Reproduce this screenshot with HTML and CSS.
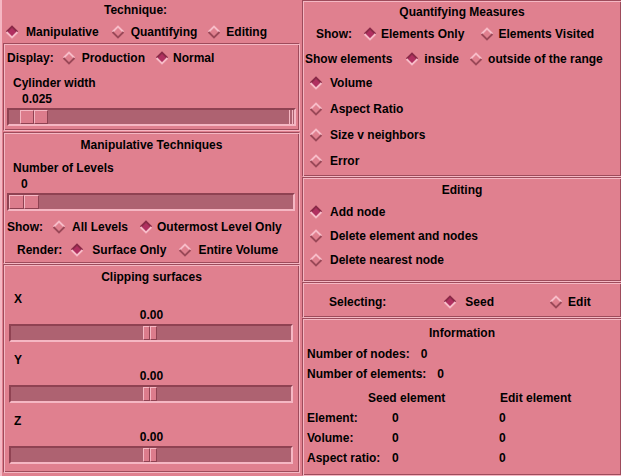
FILE: index.html
```html
<!DOCTYPE html>
<html>
<head>
<meta charset="utf-8">
<link rel="stylesheet" href="styles.css">
</head>
<body>
<svg class="defs" width="0" height="0">
  <defs>
    <symbol id="off" viewBox="0 0 14 14">
      <polygon points="7,1 13,7 7,13 1,7" fill="#e0808f"/>
      <polyline points="1.5,7 7,1.5 12.5,7" fill="none" stroke="#f7bcc8" stroke-width="1.8"/>
      <polyline points="1.5,7 7,12.5 12.5,7" fill="none" stroke="#9a4858" stroke-width="1.8"/>
    </symbol>
    <symbol id="on" viewBox="0 0 14 14">
      <polygon points="7,1 13,7 7,13 1,7" fill="#b03060"/>
      <polyline points="1.5,7 7,1.5 12.5,7" fill="none" stroke="#8a2a48" stroke-width="1.8"/>
      <polyline points="1.5,7 7,12.5 12.5,7" fill="none" stroke="#f7bcc8" stroke-width="1.8"/>
    </symbol>
  </defs>
</svg>
<div class="app">
  <div class="col left">
    <div class="technique">
      <div class="tech-title">Technique:</div>
      <div class="row tech-row">
        <span class="opt first"><svg class="dia"><use href="#on"/></svg><span class="t g7">Manipulative</span></span>
        <span class="opt m12"><svg class="dia"><use href="#off"/></svg><span class="t g6">Quantifying</span></span>
        <span class="opt m10"><svg class="dia"><use href="#off"/></svg><span class="t g5">Editing</span></span>
      </div>
    </div>

    <div class="frame display">
      <div class="row display-row">
        <span class="lbl">Display:</span>
        <span class="opt m8"><svg class="dia"><use href="#off"/></svg><span class="t g6">Production</span></span>
        <span class="opt m10"><svg class="dia"><use href="#on"/></svg><span class="t g4">Normal</span></span>
      </div>
      <div class="slabel pl8">Cylinder width</div>
      <div class="svalue pl17">0.025</div>
      <div class="trough tr-a"><div class="handle" style="margin-left:11px"><span class="half w14"></span><span class="half w14"></span></div><span class="end-tick"></span></div>
    </div>

    <div class="frame manip">
      <div class="ftitle">Manipulative Techniques</div>
      <div class="slabel pl8 mt5">Number of Levels</div>
      <div class="svalue pl16">0</div>
      <div class="trough tr-b"><div class="handle" style="margin-left:0px"><span class="half w15"></span><span class="half w15"></span></div></div>
      <div class="row show-row">
        <span class="lbl">Show:</span>
        <span class="opt m9"><svg class="dia"><use href="#off"/></svg><span class="t g6">All Levels</span></span>
        <span class="opt m11"><svg class="dia"><use href="#on"/></svg><span class="t g4">Outermost Level Only</span></span>
      </div>
      <div class="row render-row">
        <span class="lbl">Render:</span>
        <span class="opt m8"><svg class="dia"><use href="#on"/></svg><span class="t g8">Surface Only</span></span>
        <span class="opt m12"><svg class="dia"><use href="#off"/></svg><span class="t g6">Entire Volume</span></span>
      </div>
    </div>

    <div class="frame clip">
      <div class="ftitle">Clipping surfaces</div>
      <div class="axis">X</div>
      <div class="cvalue">0.00</div>
      <div class="trough tr-c"><div class="handle" style="margin-left:132px"><span class="half w7"></span><span class="half w7"></span></div></div>
      <div class="axis mt9">Y</div>
      <div class="cvalue">0.00</div>
      <div class="trough tr-c"><div class="handle" style="margin-left:132px"><span class="half w7"></span><span class="half w7"></span></div></div>
      <div class="axis mt9">Z</div>
      <div class="cvalue">0.00</div>
      <div class="trough tr-c"><div class="handle" style="margin-left:132px"><span class="half w7"></span><span class="half w7"></span></div></div>
    </div>
  </div>

  <div class="col right">
    <div class="frame quant">
      <div class="ftitle t18">Quantifying Measures</div>
      <div class="row q-show">
        <span class="lbl">Show:</span>
        <span class="opt m11"><svg class="dia"><use href="#on"/></svg><span class="t g4">Elements Only</span></span>
        <span class="opt m16"><svg class="dia"><use href="#off"/></svg><span class="t g4">Elements Visited</span></span>
      </div>
      <div class="row q-elems">
        <span class="lbl">Show elements</span>
        <span class="opt m13"><svg class="dia"><use href="#on"/></svg><span class="t g5">inside</span></span>
        <span class="opt m10"><svg class="dia"><use href="#off"/></svg><span class="t g5">outside of the range</span></span>
      </div>
      <div class="list">
        <div class="item h26"><svg class="dia"><use href="#on"/></svg><span class="t g7">Volume</span></div>
        <div class="item h26"><svg class="dia"><use href="#off"/></svg><span class="t g7">Aspect Ratio</span></div>
        <div class="item h26"><svg class="dia"><use href="#off"/></svg><span class="t g7">Size v neighbors</span></div>
        <div class="item h26"><svg class="dia"><use href="#off"/></svg><span class="t g7">Error</span></div>
      </div>
    </div>

    <div class="frame editing">
      <div class="ftitle">Editing</div>
      <div class="list">
        <div class="item h24"><svg class="dia"><use href="#on"/></svg><span class="t g7">Add node</span></div>
        <div class="item h24"><svg class="dia"><use href="#off"/></svg><span class="t g7">Delete element and nodes</span></div>
        <div class="item h24"><svg class="dia"><use href="#off"/></svg><span class="t g7">Delete nearest node</span></div>
      </div>
    </div>

    <div class="frame selecting">
      <div class="row sel-row">
        <span class="lbl">Selecting:</span>
        <span class="opt m57"><svg class="dia"><use href="#on"/></svg><span class="t g8">Seed</span></span>
        <span class="opt m55"><svg class="dia"><use href="#off"/></svg><span class="t g5">Edit</span></span>
      </div>
    </div>

    <div class="frame info">
      <div class="ftitle t24">Information</div>
      <div class="irow">Number of nodes:<span class="ival">0</span></div>
      <div class="irow">Number of elements:<span class="ival">0</span></div>
      <div class="ihead"><span class="h-seed">Seed element</span><span>Edit element</span></div>
      <div class="igrid">
        <span>Element:</span><span>0</span><span>0</span>
        <span>Volume:</span><span>0</span><span>0</span>
        <span>Aspect ratio:</span><span>0</span><span>0</span>
      </div>
    </div>
  </div>
</div>
</body>
</html>
```

FILE: styles.css
```css
* { box-sizing: border-box; }

html, body {
  margin: 0;
  padding: 0;
}

body {
  width: 621px;
  height: 476px;
  overflow: hidden;
  background: #e0808f;
  color: #000;
  font-family: "Liberation Sans", Arial, sans-serif;
  font-weight: bold;
  font-size: 12px;
}

.defs {
  position: absolute;
  width: 0;
  height: 0;
}

.app {
  display: flex;
  width: 622px;
  height: 476px;
}

.col {
  display: flex;
  flex-direction: column;
}

.left {
  width: 302px;
  border-left: 2px solid #f5b7c3;
  padding-left: 1px;
  padding-right: 2px;
}

.right {
  width: 320px;
}

/* etched frame */
.frame {
  border: 1px solid;
  border-color: #9e4b5b #f5b7c3 #f5b7c3 #9e4b5b;
  box-shadow: inset 1px 1px 0 #f5b7c3, inset -1px -1px 0 #9e4b5b;
  padding: 1px;
  display: flex;
  flex-direction: column;
}

/* text lines: pad 1px from top so glyphs sit like the X11 fonts */
.ftitle {
  text-align: center;
  line-height: 20px;
  height: 20px;
  padding-top: 1px;
}
.ftitle.t18 { line-height: 18px; height: 18px; }
.ftitle.t24 { line-height: 22px; height: 24px; padding-top: 2px; }

/* radio rows */
.row {
  display: flex;
  align-items: center;
  white-space: nowrap;
  padding-top: 2px;
}

.opt {
  display: inline-flex;
  align-items: center;
}

.dia {
  width: 14px;
  height: 14px;
  flex: none;
}

.g4 { margin-left: 4px; }
.g5 { margin-left: 5px; }
.g6 { margin-left: 6px; }
.g7 { margin-left: 7px; }
.g8 { margin-left: 8px; }

.m8 { margin-left: 8px; }
.m9 { margin-left: 9px; }
.m10 { margin-left: 10px; }
.m11 { margin-left: 11px; }
.m12 { margin-left: 12px; }
.m13 { margin-left: 13px; }
.m16 { margin-left: 16px; }
.m55 { margin-left: 55px; }
.m57 { margin-left: 57px; }

/* technique */
.technique {
  height: 43px;
  display: flex;
  flex-direction: column;
}

.tech-title {
  width: 265px;
  text-align: center;
  line-height: 18px;
  height: 18px;
  padding-top: 1px;
}

.tech-row {
  height: 22px;
  margin-top: 2px;
  padding-left: 2px;
}

/* display */
.display { height: 88px; }

.display-row {
  height: 24px;
  padding-left: 2px;
}

.slabel {
  line-height: 16px;
  height: 16px;
  margin-top: 5px;
  padding-top: 1px;
}

.svalue {
  line-height: 16px;
  height: 16px;
  padding-top: 1px;
}

.pl8 { padding-left: 8px; }
.pl16 { padding-left: 16px; }
.pl17 { padding-left: 17px; }
.mt5 { margin-top: 5px; }
.mt9 { margin-top: 9px; }

/* scale trough */
.trough {
  height: 18px;
  margin-top: 2px;
  background: #ae6271;
  border: 2px solid;
  border-color: #8f4252 #f5b7c3 #f5b7c3 #8f4252;
  display: flex;
  justify-content: space-between;
}

.tr-a { margin-left: 2px; margin-right: 2px; }
.tr-b { margin-left: 2px; margin-right: 3px; }
.tr-c { margin-left: 4px; margin-right: 5px; }

.handle {
  display: flex;
  height: 14px;
}

.half {
  height: 14px;
  background: #dc7c8c;
  border: 1px solid;
  border-color: #f5b7c3 #8f4252 #8f4252 #f5b7c3;
}

.end-tick {
  width: 4px;
  height: 14px;
  border-left: 1px solid #f5b7c3;
  border-right: 1px solid #f5b7c3;
  margin-right: 1px;
}

.w7 { width: 7px; }
.w14 { width: 14px; }
.w15 { width: 15px; }

/* manipulative */
.manip {
  height: 132px;
  margin-top: 1px;
}

.show-row {
  height: 22px;
  margin-top: 4px;
  padding-left: 2px;
}

.render-row {
  height: 23px;
  padding-left: 12px;
}

/* clipping */
.clip {
  height: 209px;
}

.axis {
  line-height: 16px;
  height: 16px;
  margin-top: 4px;
  padding-left: 9px;
  padding-top: 1px;
}
.axis.mt9 { margin-top: 9px; }

.cvalue {
  line-height: 16px;
  height: 16px;
  text-align: center;
  padding-top: 1px;
}

/* right column */
.quant { height: 177px; }

.q-show {
  height: 26px;
  padding-left: 12px;
}

.q-elems {
  height: 23px;
  padding-left: 1px;
}

.list {
  display: flex;
  flex-direction: column;
  padding-left: 5px;
}

.item {
  display: flex;
  align-items: center;
  white-space: nowrap;
  padding-top: 2px;
}

.h24 { height: 24px; }
.h26 { height: 26px; }

.editing { height: 106px; }

.selecting { height: 36px; }

.sel-row {
  height: 32px;
  padding-left: 25px;
  padding-top: 4px;
}

.info { height: 158px; }

.irow {
  line-height: 20px;
  height: 20px;
  padding-left: 3px;
}

.ival { margin-left: 11px; }

.ihead {
  display: flex;
  line-height: 20px;
  height: 20px;
  margin-top: 4px;
  padding-left: 64px;
}

.h-seed { width: 132px; }

.igrid {
  display: grid;
  grid-template-columns: 85px 107px auto;
  grid-auto-rows: 20px;
  line-height: 20px;
  padding-left: 3px;
}
```
